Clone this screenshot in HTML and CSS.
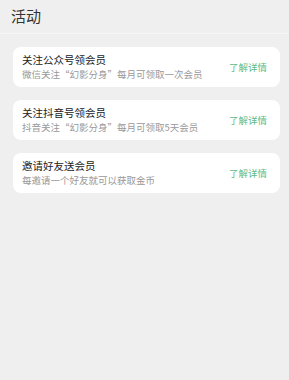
FILE: index.html
```html
<!DOCTYPE html>
<html lang="zh-CN">
<head>
    <meta charset="UTF-8">
    <meta name="viewport" content="width=device-width, initial-scale=1.0">
    <title>活动</title>
    <link rel="stylesheet" href="styles.css">
</head>
<body>

    <div class="header">活动</div>

    <div class="list">
        <div class="item">
            <div class="info">
                <div class="title">关注公众号领会员</div>
                <div class="desc">微信关注“幻影分身”每月可领取一次会员</div>
            </div>
            <div class="more">了解详情</div>
        </div>

        <div class="item">
            <div class="info">
                <div class="title">关注抖音号领会员</div>
                <div class="desc">抖音关注“幻影分身”每月可领取5天会员</div>
            </div>
            <div class="more">了解详情</div>
        </div>

        <div class="item">
            <div class="info">
                <div class="title">邀请好友送会员</div>
                <div class="desc">每邀请一个好友就可以获取金币</div>
            </div>
            <div class="more">了解详情</div>
        </div>
    </div>

</body>
</html>
```

FILE: styles.css
```css
body {
    margin: 0;
    background-color: #efefef;
    font-family: "Noto Sans CJK SC", "Noto Sans", sans-serif;
    color: #222;
}

.header {
    height: 33px;
    line-height: 32px;
    padding-left: 11px;
    font-size: 15px;
    color: #333;
    border-bottom: 1px solid #f6f6f6;
}

.list {
    display: flex;
    flex-direction: column;
    gap: 13px;
    padding: 13px 9px 0 13px;
}

.item {
    display: flex;
    align-items: center;
    justify-content: space-between;
    height: 40px;
    padding: 0 13px 0 9px;
    background-color: white;
    border-radius: 8px;
}

.title {
    font-size: 10.5px;
    line-height: 15px;
    color: #222;
}

.desc {
    font-size: 9.5px;
    line-height: 15px;
    color: #999;
}

.more {
    font-size: 9.5px;
    color: #5cb981;
}
```
